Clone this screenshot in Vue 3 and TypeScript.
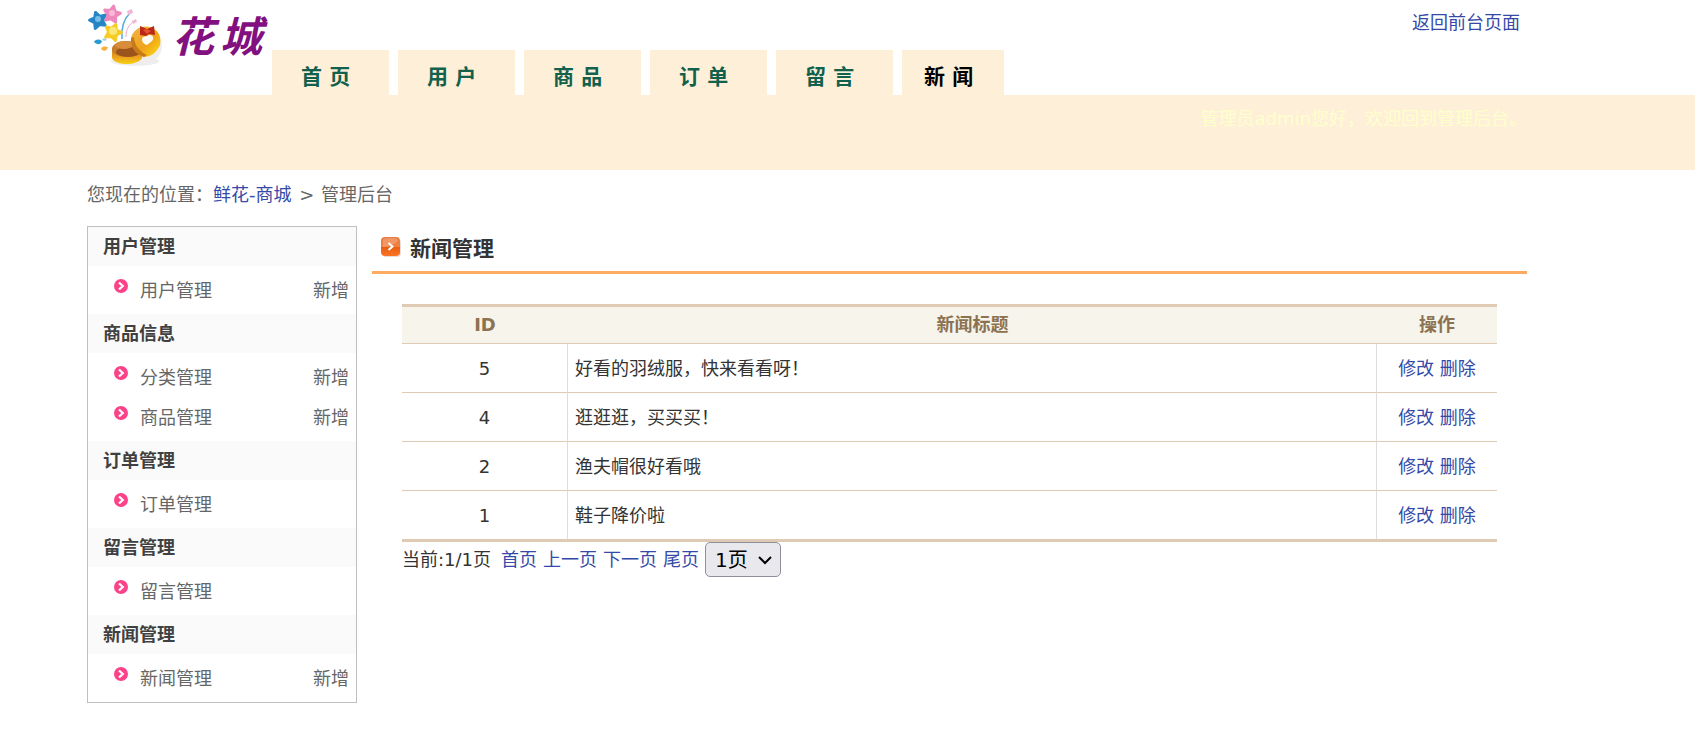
<script setup lang="ts">
import { ref } from 'vue'

interface MenuItem {
  name: string
  addable: boolean
}
interface MenuGroup {
  title: string
  items: MenuItem[]
}
interface NewsRow {
  id: number
  title: string
}

const tabs: string[] = ['首 页', '用 户', '商 品', '订 单', '留 言', '新 闻']
const currentTab = '新 闻'

const menu: MenuGroup[] = [
  { title: '用户管理', items: [{ name: '用户管理', addable: true }] },
  {
    title: '商品信息',
    items: [
      { name: '分类管理', addable: true },
      { name: '商品管理', addable: true },
    ],
  },
  { title: '订单管理', items: [{ name: '订单管理', addable: false }] },
  { title: '留言管理', items: [{ name: '留言管理', addable: false }] },
  { title: '新闻管理', items: [{ name: '新闻管理', addable: true }] },
]

const news = ref<NewsRow[]>([
  { id: 5, title: '好看的羽绒服，快来看看呀！' },
  { id: 4, title: '逛逛逛，买买买！' },
  { id: 2, title: '渔夫帽很好看哦' },
  { id: 1, title: '鞋子降价啦' },
])

const pageLinks: string[] = ['首页', '上一页', '下一页', '尾页']
const page = ref(1)
</script>

<template>
  <div class="page">
    <header class="top frame">
      <a class="logo" href="#">
        <svg class="logo-art" viewBox="0 0 76 64" aria-hidden="true">
          <defs>
            <linearGradient id="gold" x1="0" y1="0" x2="1" y2="1">
              <stop offset="0" stop-color="#f2b544" />
              <stop offset=".55" stop-color="#f0a21c" />
              <stop offset="1" stop-color="#fbe10c" />
            </linearGradient>
            <linearGradient id="tub" x1="0" y1="0" x2="0" y2="1">
              <stop offset="0" stop-color="#c9761f" />
              <stop offset=".6" stop-color="#eda51d" />
              <stop offset="1" stop-color="#f8d212" />
            </linearGradient>
            <path
              id="star"
              d="M0-8l2.500 5 5.500.5-4 4 1.200 5.700L0 4.800-5.200 7.200-4 1.500-8-2.500l5.500-.5z"
              stroke-width="3"
              stroke-linejoin="round"
            />
          </defs>
          <ellipse cx="48" cy="57" rx="24" ry="5" fill="#efedee" />
          <ellipse cx="66" cy="42" rx="9" ry="13" fill="#efedf0" />
          <path d="M35 35C34 24 37 15 43 9" fill="none" stroke="#58acd8" stroke-width="1.5" />
          <path d="M39 33c0-8 3-12 8-16" fill="none" stroke="#e7a9cc" stroke-width="1" />
          <path d="M40 7l5-2 1 4-5 2zM45 17l4-2 1 3-4 2z" fill="#f2b6d6" />
          <use href="#star" transform="translate(25 10) rotate(12)" fill="#ef88bd" stroke="#ef88bd" />
          <circle cx="25" cy="9" r="3" fill="#f8b8d8" />
          <use href="#star" transform="translate(11 16) rotate(-18)" fill="#2486c5" stroke="#2486c5" />
          <circle cx="11" cy="15" r="3" fill="#75bfe8" />
          <use href="#star" transform="translate(26 28) rotate(20)" fill="#f6cc24" stroke="#f6cc24" />
          <circle cx="26" cy="27" r="4" fill="#fae779" />
          <path d="M7 38c2-3 5-3 8-1-1 4-5 4-8 1z" fill="#289bd3" />
          <path d="M15 35l3-1 2 2-3 1z" fill="#a6cde7" />
          <path d="M14 45c2-4 5-2 7-2-1 4-4 5-7 2z" fill="#f7ae3d" />
          <path d="M25 44v10c4 8 25 8 30 0l1-10z" fill="url(#tub)" />
          <ellipse cx="40" cy="45" rx="15" ry="8" fill="#c77c2b" />
          <ellipse cx="41" cy="48" rx="12" ry="5" fill="#9b551c" />
          <ellipse cx="37" cy="41" rx="9" ry="4" fill="#d98c3a" />
          <path d="M44 34c2-8 10-13 18-11 9 2 13 9 11 18-3 7-9 12-16 12-8-3-14-10-13-19z" fill="url(#gold)" />
          <path d="M44 34c-1 9 5 16 13 19l3-2c-7-3-13-10-13-18z" fill="#c67a18" />
          <path d="M53 22l7 3 7-3 1 9-6-1-3 2-6-1z" fill="#b92718" />
          <path d="M56 26l4-1 4 2-4 3z" fill="#e35230" />
          <path d="M60 32c5-3 8 2 5 5l-5 4c-5-1-6-6-4-8z" fill="#fffaf1" />
        </svg>
        <span class="logo-name"><span>花</span><span>城</span></span>
      </a>
      <nav class="tabs">
        <a
          v-for="tab in tabs"
          :key="tab"
          href="#"
          class="tab"
          :class="{ current: tab === currentTab }"
        >{{ tab }}</a>
      </nav>
      <a class="back" href="#">返回前台页面</a>
    </header>

    <div class="band">
      <p class="welcome frame">管理员admin您好，欢迎回到管理后台。</p>
    </div>

    <div class="crumbs frame">
      您现在的位置：<a href="#">鲜花-商城</a> <span class="sep">&gt;</span> 管理后台
    </div>

    <div class="body frame">
      <aside class="menu">
        <section v-for="group in menu" :key="group.title">
          <h2 class="menu-title">{{ group.title }}</h2>
          <ul class="menu-list">
            <li v-for="item in group.items" :key="item.name" class="menu-item">
              <svg class="bullet" viewBox="0 0 14 14" aria-hidden="true">
                <circle cx="7" cy="7" r="7" fill="#fc4289" />
                <path d="M5 3.500L8.800 7 5 10.500" fill="none" stroke="#fff" stroke-width="2.200" />
              </svg>
              <a href="#">{{ item.name }}</a>
              <a v-if="item.addable" class="add" href="#">新增</a>
            </li>
          </ul>
        </section>
      </aside>

      <main class="main">
        <h1 class="title">
          <svg class="title-icon" viewBox="0 0 20 22" aria-hidden="true">
            <defs>
              <linearGradient id="orange" x1="0" y1="0" x2="0" y2="1">
                <stop offset="0" stop-color="#e97b3e" />
                <stop offset=".5" stop-color="#f08042" />
                <stop offset=".55" stop-color="#ea5f12" />
                <stop offset="1" stop-color="#fb7426" />
              </linearGradient>
            </defs>
            <rect x="1" y="3" width="19" height="18" rx="4" fill="#e6dcd8" />
            <rect x="0" y="1" width="19" height="19" rx="4" fill="url(#orange)" />
            <path d="M2 4q1-2 4-2h7q4 0 4 3-5 5-15 6z" fill="#fff" opacity=".2" />
            <path d="M7.500 7l4 3.500-4 3.500" fill="none" stroke="#fff" stroke-width="2" />
          </svg>
          新闻管理
        </h1>

        <div class="manage">
          <table class="list">
            <thead>
              <tr>
                <th class="col-id" scope="col">ID</th>
                <th scope="col">新闻标题</th>
                <th class="col-act" scope="col">操作</th>
              </tr>
            </thead>
            <tbody>
              <tr v-for="row in news" :key="row.id">
                <td class="center">{{ row.id }}</td>
                <td>{{ row.title }}</td>
                <td class="center"><a href="#">修改</a> <a href="#">删除</a></td>
              </tr>
            </tbody>
          </table>

          <div class="pager">
            <span class="count">当前:1/1页</span>
            <a v-for="link in pageLinks" :key="link" href="#">{{ link }}</a>
            <span class="picker">
              <select v-model="page" aria-label="页码">
                <option :value="1">1页</option>
              </select>
              <svg class="arrow" viewBox="0 0 14 9" aria-hidden="true">
                <path d="M1 1l6 6 6-6" fill="none" stroke="#000" stroke-width="2" />
              </svg>
            </span>
          </div>
        </div>
      </main>
    </div>
  </div>
</template>

<style>
body {
  margin: 0;
  background: #fff;
}
</style>

<style scoped>
.page {
  font-family: Verdana, "DejaVu Sans", "Noto Sans CJK SC", sans-serif;
  font-size: 18px;
  line-height: 26px;
  color: #333;
}
a {
  color: #3449a8;
  text-decoration: none;
}
.frame {
  margin: 0 168px 0 87px;
}
.top {
  display: flex;
  height: 95px;
}
.logo {
  display: flex;
  width: 185px;
  padding-top: 4px;
  flex: none;
  box-sizing: border-box;
}
.logo-art {
  width: 76px;
  height: 64px;
  flex: none;
}
.logo-name {
  display: flex;
  gap: 6px;
  padding: 4px 0 0 9px;
  font-size: 42px;
  font-style: italic;
  font-weight: 700;
  line-height: 60px;
  white-space: nowrap;
  color: #83107f;
}
.tabs {
  display: flex;
  align-items: flex-end;
  gap: 9px;
}
.tab {
  width: 117px;
  height: 45px;
  box-sizing: border-box;
  padding: 14px 0 0 29px;
  background: #feefd9;
  color: #11614d;
  font-size: 21px;
  font-weight: 700;
  white-space: nowrap;
}
.tab.current {
  width: 102px;
  padding-left: 22px;
  color: #000;
}
.back {
  margin: 10px 7px 0 auto;
  white-space: nowrap;
}
.band {
  height: 75px;
  background: #feefd9;
}
.welcome {
  padding-top: 11px;
  text-align: right;
  color: #ffc;
}
.crumbs {
  padding: 12px 0 18px;
  color: #666;
}
.sep {
  padding: 0 1px 0 2px;
}
.body {
  display: flex;
  align-items: flex-start;
  gap: 15px;
}
.menu {
  width: 270px;
  flex: none;
  box-sizing: border-box;
  border: 1px solid #bfbfbf;
}
.menu-title {
  margin: 0;
  padding: 1px 0 0 15px;
  background: #fafafa;
  color: #404040;
  font-size: 18px;
  line-height: 38px;
}
.menu-list {
  margin: 0;
  padding: 5px 7px 3px 26px;
  list-style: none;
}
.menu-item {
  display: flex;
  height: 40px;
  line-height: 40px;
}
.menu-item a {
  color: #666;
}
.bullet {
  width: 14px;
  height: 14px;
  margin: 8px 12px 0 0;
}
.menu-item .add {
  margin-left: auto;
}
.main {
  flex: 1;
  min-width: 0;
}
.title {
  display: flex;
  gap: 9px;
  margin: 0;
  padding: 10px 9px 9px;
  border-bottom: 3px solid #fcab61;
  font-size: 21px;
  line-height: 26px;
}
.title-icon {
  width: 20px;
  height: 22px;
}
.manage {
  padding: 30px 30px 0;
}
.list {
  width: 100%;
  border-collapse: separate;
  border-spacing: 0;
  border-top: 3px solid #dfcab3;
  border-bottom: 3px solid #dfcab3;
}
.list th {
  height: 36px;
  padding: 0;
  background: #f6f4eb;
  border-bottom: 1px solid #dfcab3;
  color: #8c7251;
}
.list td {
  height: 46px;
  padding: 2px 7px 0;
  border-bottom: 1px solid #dfcab3;
  border-right: 1px solid #ddd;
}
.list td:last-child {
  border-right: 0;
}
.list tbody tr:last-child td {
  border-bottom: 0;
}
.col-id {
  width: 166px;
}
.col-act {
  width: 120px;
}
.list .center {
  text-align: center;
}
.pager {
  display: flex;
  align-items: center;
  gap: 6px;
}
.count {
  padding-right: 4px;
}
.picker {
  position: relative;
  display: flex;
}
.picker select {
  width: 76px;
  height: 35px;
  padding: 0 9px;
  appearance: none;
  border: 1px solid #8f8f9d;
  border-radius: 5px;
  background: #e9e9ed;
  color: #000;
  font: inherit;
  font-size: 20px;
}
.arrow {
  position: absolute;
  top: 14px;
  right: 9px;
  width: 14px;
  height: 9px;
  pointer-events: none;
}
</style>
